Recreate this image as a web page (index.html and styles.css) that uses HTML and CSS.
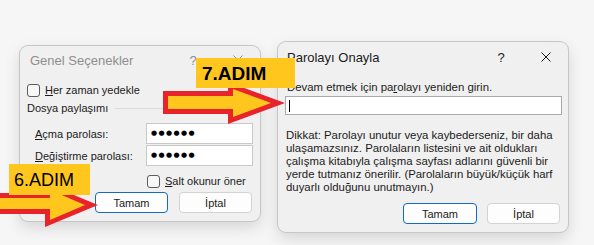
FILE: index.html
```html
<!DOCTYPE html>
<html lang="tr">
<head>
  <meta charset="UTF-8" />
  <meta name="viewport" content="width=device-width, initial-scale=1" />
  <title>Parolayı Onayla</title>
  <link rel="stylesheet" href="styles.css">
</head>
<body>
  <div class="stage">
    <div class="dialog general">
      <div class="titlebar">
        <span class="title">Genel Seçenekler</span>
        <span class="help">?</span>
        <span class="close">
          <svg width="10" height="10" viewBox="0 0 10 10"><path d="M0.5 0.5L9.5 9.5M9.5 0.5L0.5 9.5" stroke="currentColor" stroke-width="1" fill="none"/></svg>
        </span>
      </div>
      <div class="check-row first"><span class="box"></span><span><u>H</u>er zaman yedekle</span></div>
      <div class="group-head"><span>Dosya paylaşımı</span><span class="rule"></span></div>
      <div class="field first-field">
        <span class="field-label"><u>A</u>çma parolası:</span>
        <span class="pwd">●●●●●●</span>
      </div>
      <div class="field">
        <span class="field-label"><u>D</u>eğiştirme parolası:</span>
        <span class="pwd">●●●●●●</span>
      </div>
      <div class="check-row salt"><span class="box"></span><span><u>S</u>alt okunur öner</span></div>
      <div class="buttons left-buttons">
        <button class="btn primary">Tamam</button>
        <button class="btn">İptal</button>
      </div>
    </div>

    <div class="dialog confirm">
      <div class="titlebar">
        <span class="title">Parolayı Onayla</span>
        <span class="help">?</span>
        <span class="close">
          <svg width="10" height="10" viewBox="0 0 10 10"><path d="M0.5 0.5L9.5 9.5M9.5 0.5L0.5 9.5" stroke="currentColor" stroke-width="1" fill="none"/></svg>
        </span>
      </div>
      <div class="prompt">Devam etmek için pa<u>r</u>olayı yeniden girin.</div>
      <div class="text-input"><span class="caret"></span></div>
      <p class="note">Dikkat: Parolayı unutur veya kaybederseniz, bir daha<br>ulaşamazsınız. Parolaların listesini ve ait oldukları<br>çalışma kitabıyla çalışma sayfası adlarını güvenli bir<br>yerde tutmanız önerilir. (Parolaların büyük/küçük harf<br>duyarlı olduğunu unutmayın.)</p>
      <div class="buttons right-buttons">
        <button class="btn primary">Tamam</button>
        <button class="btn">İptal</button>
      </div>
    </div>

    <svg class="arrows" width="594" height="245" viewBox="0 0 594 245">
      <polygon class="arrow-edge" points="163,91 228,91 228,82 285,103 228,124 228,114 163,114"/>
      <polygon class="arrow-fill" points="168,96 233,96 233,89 271,103 233,117 233,109 168,109"/>
      <polygon class="arrow-edge" points="-5,193 45,193 45,183 98,205 45,227 45,214 -5,214"/>
      <polygon class="arrow-fill" points="-5,198 50,198 50,190 85,205 50,220 50,209 -5,209"/>
    </svg>
    <div class="step step-seven">7.ADIM</div>
    <div class="step step-six">6.ADIM</div>
  </div>
</body>
</html>
```

FILE: styles.css
```css
body {
  margin: 0;
  background: #f6f6f6;
  font-family: "Liberation Sans", Arial, sans-serif;
  font-size: 11px;
  color: #1b1b1b;
}
.stage {
  position: relative;
  width: 594px;
  height: 245px;
  overflow: hidden;
  display: flex;
  align-items: flex-start;
  gap: 18px;
  padding: 42px 0 0 20px;
  box-sizing: border-box;
}
.dialog {
  background: #f0f0f0;
  border-radius: 8px;
  box-shadow: 0 0 0 1px #c6c6c6, 0 6px 16px rgba(0,0,0,0.14);
  display: flex;
  flex-direction: column;
}
.general {
  width: 240px;
  height: 175px;
  margin-top: 4px;
}
.confirm {
  width: 290px;
  height: 190px;
  font-size: 11.4px;
}
.titlebar {
  display: flex;
  align-items: center;
  height: 28px;
  font-size: 13px;
}
.confirm .titlebar {
  height: 30px;
}
.titlebar .title {
  flex: 1;
  padding-left: 10px;
}
.confirm .titlebar .title {
  padding-left: 9px;
}
.general .titlebar {
  color: #8e8e8e;
}
.help {
  width: 16px;
  text-align: center;
  margin-right: 15px;
  font-size: 13px;
}
.close {
  width: 44px;
  display: flex;
  justify-content: center;
}
.close svg {
  display: block;
}
.check-row {
  display: flex;
  align-items: center;
  gap: 5px;
  height: 16px;
  padding-left: 7px;
}
.check-row.first {
  margin-top: 8px;
}
.box {
  width: 11px;
  height: 11px;
  border: 1px solid #5c5c5c;
  border-radius: 3px;
  background: #f7f7f7;
}
.group-head {
  display: flex;
  align-items: center;
  height: 16px;
  margin-top: 2px;
  padding: 0 5px 0 7px;
}
.rule {
  flex: 1;
  height: 1px;
  margin-left: 7px;
  background: #dadada;
}
.field {
  display: flex;
  align-items: center;
  height: 21px;
  margin-top: 1px;
}
.field.first-field {
  margin-top: 7px;
}
.field-label {
  width: 111px;
  padding-left: 15px;
}
.pwd {
  width: 107px;
  height: 21px;
  box-sizing: border-box;
  border: 1px solid #c9c9c9;
  background: #fff;
  font-family: "DejaVu Sans", sans-serif;
  font-size: 7px;
  letter-spacing: 1.4px;
  line-height: 19px;
  padding-left: 4px;
  color: #000;
}
.check-row.salt {
  margin-top: 7px;
  padding-left: 127px;
}
.buttons {
  display: flex;
  gap: 11px;
  margin-top: 3px;
}
.left-buttons {
  padding-left: 75px;
}
.btn {
  width: 73px;
  height: 21px;
  padding: 0;
  font-family: inherit;
  font-size: 11px;
  color: #1b1b1b;
  background: #fdfdfd;
  border: 1px solid #d3d3d3;
  border-radius: 4px;
}
.btn.primary {
  border-color: #1469c4;
}
.prompt {
  height: 16px;
  line-height: 16px;
  margin-top: 7px;
  padding-left: 9px;
}
.text-input {
  height: 19px;
  box-sizing: border-box;
  margin: 1px 6px 0 7px;
  border: 1px solid #a9a9a9;
  background: #fff;
  display: flex;
  align-items: center;
  padding-left: 3px;
}
.caret {
  width: 1px;
  height: 12px;
  background: #000;
}
.note {
  margin: 14px 0 0;
  padding-left: 8px;
  line-height: 13px;
}
.right-buttons {
  justify-content: flex-end;
  gap: 10px;
  padding-right: 8px;
  margin-top: 9px;
}
.right-buttons .btn.primary {
  width: 74px;
}
.arrows {
  position: absolute;
  left: 0;
  top: 0;
}
.arrow-edge {
  fill: #e9232b;
}
.arrow-fill {
  fill: #ffc61d;
}
.step {
  position: absolute;
  background: #ffc61d;
  color: #000;
  box-sizing: border-box;
}
.step-seven {
  left: 196px;
  top: 58px;
  width: 99px;
  height: 30px;
  padding-left: 6px;
  font-size: 19px;
  font-weight: bold;
  line-height: 31px;
}
.step-six {
  left: 9px;
  top: 164px;
  width: 81px;
  height: 31px;
  padding-left: 5px;
  font-size: 18px;
  line-height: 33px;
}
```
